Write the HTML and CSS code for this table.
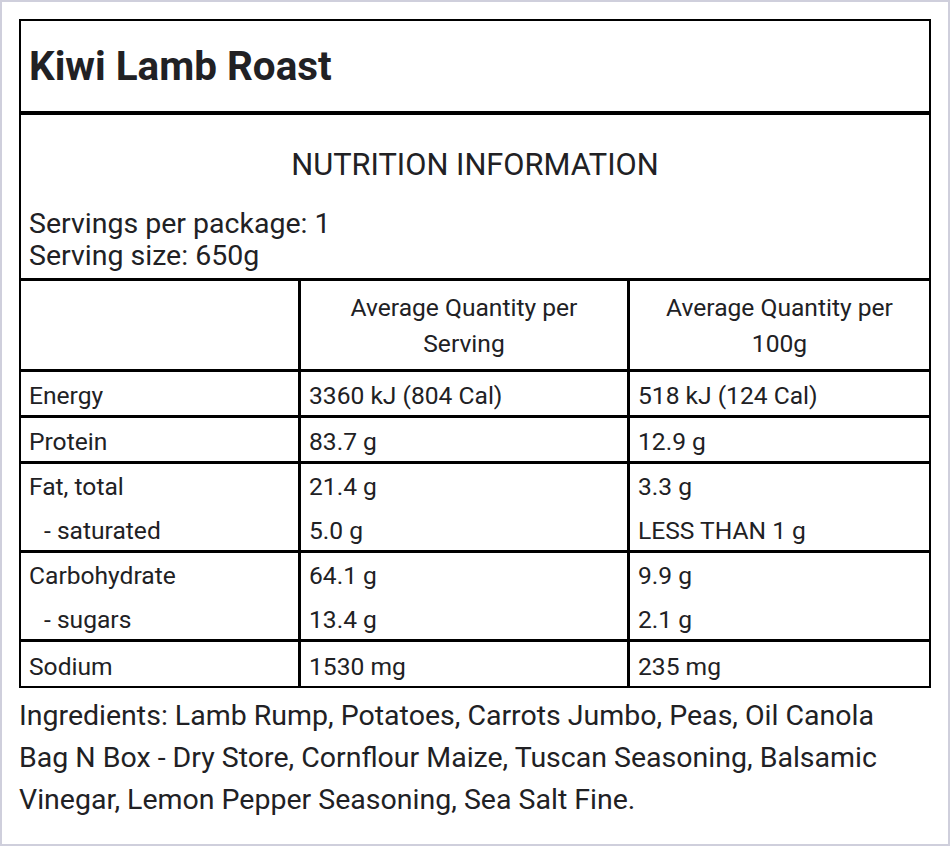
FILE: index.html
```html
<!DOCTYPE html>
<html lang="en">
<head>
<meta charset="utf-8">
<title>Kiwi Lamb Roast</title>
<link rel="stylesheet" href="styles.css">
</head>
<body>
<div class="frame">
  <div class="title-box">
    <h1 class="title">Kiwi Lamb Roast</h1>
  </div>
  <div class="info-box">
    <h2 class="info-heading">NUTRITION INFORMATION</h2>
    <p class="servings">Servings per package: 1<br>Serving size: 650g</p>
  </div>
  <div class="nutri-grid">
    <div class="cell head"></div>
    <div class="cell head center">Average Quantity per Serving</div>
    <div class="cell head center">Average Quantity per 100g</div>

    <div class="cell">Energy</div>
    <div class="cell">3360 kJ (804 Cal)</div>
    <div class="cell">518 kJ (124 Cal)</div>

    <div class="cell">Protein</div>
    <div class="cell">83.7 g</div>
    <div class="cell">12.9 g</div>

    <div class="cell double"><div>Fat, total</div><div class="sub">- saturated</div></div>
    <div class="cell double"><div>21.4 g</div><div>5.0 g</div></div>
    <div class="cell double"><div>3.3 g</div><div>LESS THAN 1 g</div></div>

    <div class="cell double"><div>Carbohydrate</div><div class="sub">- sugars</div></div>
    <div class="cell double"><div>64.1 g</div><div>13.4 g</div></div>
    <div class="cell double"><div>9.9 g</div><div>2.1 g</div></div>

    <div class="cell last">Sodium</div>
    <div class="cell last">1530 mg</div>
    <div class="cell last">235 mg</div>
  </div>
  <p class="ingredients">Ingredients: Lamb Rump, Potatoes, Carrots Jumbo, Peas, Oil Canola Bag N Box - Dry Store, Cornflour Maize, Tuscan Seasoning, Balsamic Vinegar, Lemon Pepper Seasoning, Sea Salt Fine.</p>
</div>
</body>
</html>
```

FILE: styles.css
```css
html, body {
  margin: 0;
  padding: 0;
  background: #ffffff;
}

body {
  font-family: Roboto, "Liberation Sans", sans-serif;
  color: #212124;
}

.frame {
  box-sizing: border-box;
  width: 950px;
  height: 846px;
  border: 2px solid #cfcfdc;
  padding: 17px 17px 0 17px;
}

.title-box {
  border: 2px solid #000;
  padding: 0 8px;
}

.title {
  margin: 0;
  font-size: 40.4px;
  font-weight: 700;
  line-height: 90px;
  padding-top: 1px;
  height: 89px;
}

.info-box {
  border: 2px solid #000;
  border-bottom: none;
  padding: 32px 8px 6px 8px;
}

.info-heading {
  margin: 0 0 25px 0;
  font-size: 30.8px;
  font-weight: 400;
  line-height: 36px;
  text-align: center;
}

.servings {
  margin: 0;
  font-size: 28.5px;
  line-height: 32px;
}

.nutri-grid {
  display: grid;
  grid-template-columns: 277px 326px 299px;
  grid-template-rows: 88px 43px 43px 86px 86px 44px;
  gap: 3px;
  background: #000;
  border-top: 3px solid #000;
  border-left: 2px solid #000;
  border-right: 2px solid #000;
  border-bottom: 2px solid #000;
}

.cell {
  background: #fff;
  padding: 2px 8px 0 8px;
  font-size: 24.6px;
  line-height: 43px;
}

.cell.double {
  padding-top: 1px;
  line-height: 44px;
}

.cell.last {
  padding-top: 3px;
  line-height: 44px;
}

.cell.head {
  display: flex;
  align-items: center;
  justify-content: center;
  padding: 2px 8px 0 8px;
  line-height: 36px;
}

.cell.center {
  text-align: center;
}

.sub {
  padding-left: 15px;
}

.ingredients {
  margin: 7px 10px 0 0;
  font-size: 28.5px;
  line-height: 42px;
}
```
